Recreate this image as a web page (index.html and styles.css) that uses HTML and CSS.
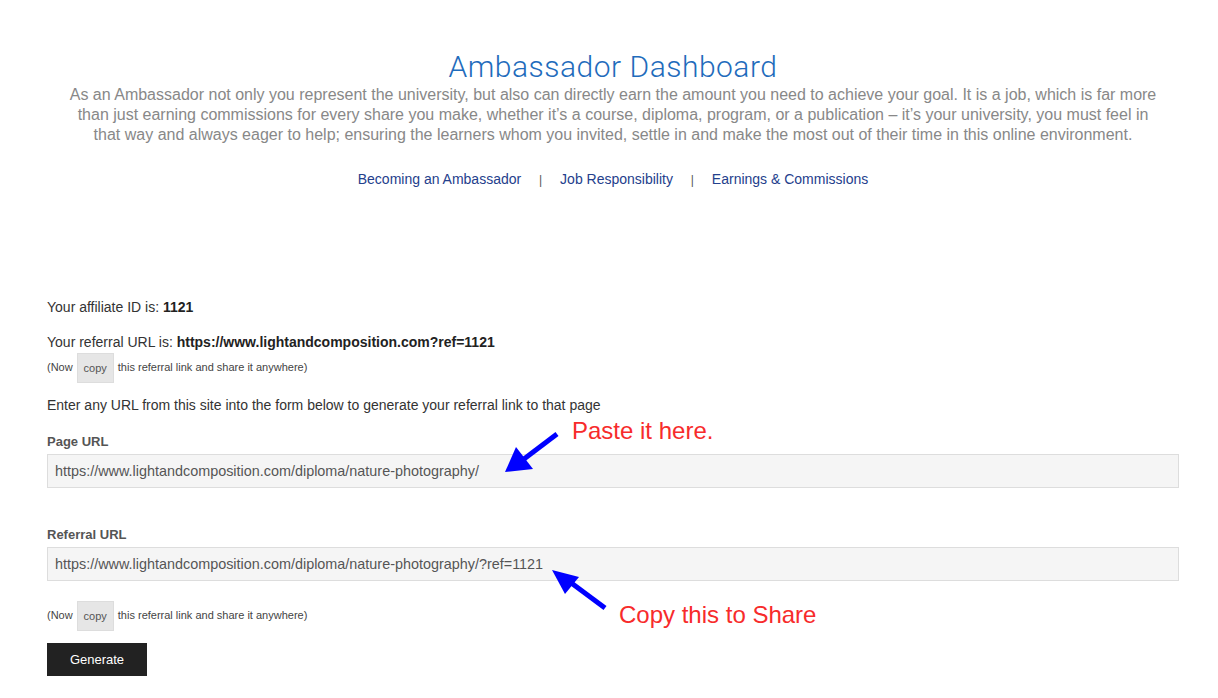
FILE: index.html
```html
<!DOCTYPE html>
<html lang="en">
<head>
  <meta charset="UTF-8" />
  <title>Ambassador Dashboard</title>
  <link rel="stylesheet" href="styles.css">
</head>
<body>
  <header class="intro">
    <h1>Ambassador Dashboard</h1>
    <p>As an Ambassador not only you represent the university, but also can directly earn the amount you need to achieve your goal. It is a job, which is far more than just earning commissions for every share you make, whether it’s a course, diploma, program, or a publication – it’s your university, you must feel in that way and always eager to help; ensuring the learners whom you invited, settle in and make the most out of their time in this online environment.</p>
    <nav class="intro-links">
      <a href="#">Becoming an Ambassador</a>
      <span class="sep">|</span>
      <a href="#">Job Responsibility</a>
      <span class="sep">|</span>
      <a href="#">Earnings &amp; Commissions</a>
    </nav>
  </header>

  <main class="panel">
    <p class="line">Your affiliate ID is: <strong>1121</strong></p>
    <p class="line line-ref">Your referral URL is: <strong>https://www.lightandcomposition.com?ref=1121</strong></p>
    <p class="note">(Now <button class="copy">copy</button> this referral link and share it anywhere)</p>
    <p class="line line-enter">Enter any URL from this site into the form below to generate your referral link to that page</p>

    <form class="ref-form">
      <label for="page-url">Page URL</label>
      <input id="page-url" type="text" value="https://www.lightandcomposition.com/diploma/nature-photography/">
      <label for="ref-url" class="label-ref">Referral URL</label>
      <input id="ref-url" type="text" value="https://www.lightandcomposition.com/diploma/nature-photography/?ref=1121">
      <p class="note note-form">(Now <button type="button" class="copy">copy</button> this referral link and share it anywhere)</p>
      <button type="button" class="generate">Generate</button>
    </form>
  </main>

  <!-- annotations drawn over the screenshot -->
  <svg class="arrows" width="1218" height="698" viewBox="0 0 1218 698">
    <line x1="557" y1="434" x2="520" y2="462" stroke="#0000ff" stroke-width="5" />
    <polygon points="505,472 516,447 533,469" fill="#0000ff" />
    <line x1="605" y1="608" x2="570" y2="582" stroke="#0000ff" stroke-width="5" />
    <polygon points="552,570 579,577 565,594" fill="#0000ff" />
  </svg>
  <div class="callout callout-paste">Paste it here.</div>
  <div class="callout callout-copy">Copy this to Share</div>
</body>
</html>
```

FILE: styles.css
```css
* {
  box-sizing: border-box;
}
body {
  margin: 0;
  position: relative;
  font-family: "Liberation Sans", Arial, sans-serif;
  color: #333;
  background: #fff;
}
.intro {
  width: 1100px;
  margin: 0 0 0 63px;
  text-align: center;
  padding-top: 50px;
}
.intro h1 {
  margin: 0;
  font-family: Roboto, "Liberation Sans", sans-serif;
  font-weight: 300;
  font-size: 30px;
  line-height: 34px;
  color: #1f6cbc;
  letter-spacing: 0.5px;
}
.intro p {
  margin: 1px 0 0;
  font-size: 16px;
  line-height: 20px;
  color: #888;
}
.intro-links {
  margin-top: 24px;
  font-size: 14px;
  line-height: 20px;
}
.intro-links a {
  color: #24408c;
  text-decoration: none;
}
.intro-links .sep {
  color: #555;
  font-size: 12px;
  margin: 0 14px;
}
.panel {
  width: 1132px;
  margin: 108px 0 0 47px;
}
.line {
  margin: 0;
  font-size: 14px;
  line-height: 18px;
}
.line strong {
  color: #222;
}
.line-ref {
  margin-top: 17px;
}
.note {
  margin: 1px 0 0;
  font-size: 11px;
  line-height: 30px;
  color: #444;
}
.copy {
  display: inline-block;
  vertical-align: middle;
  width: 37px;
  height: 30px;
  padding: 0;
  margin: 0 1px;
  border: 1px solid #ddd;
  background: #e6e6e6;
  font-family: inherit;
  font-size: 11px;
  color: #555;
}
.line-enter {
  margin-top: 13px;
}
.ref-form {
  display: flex;
  flex-direction: column;
  align-items: flex-start;
}
.ref-form label {
  margin-top: 19px;
  font-size: 13px;
  line-height: 18px;
  font-weight: bold;
  color: #555;
}
.ref-form .label-ref {
  margin-top: 38px;
}
.ref-form input {
  width: 100%;
  height: 34px;
  margin-top: 3px;
  padding: 0 7px;
  border: 1px solid #ddd;
  background: #f5f5f5;
  font-family: inherit;
  font-size: 14.4px;
  color: #555;
}
.note-form {
  margin-top: 19px;
}
.generate {
  margin-top: 12px;
  width: 100px;
  height: 33px;
  border: none;
  background: #222;
  color: #fff;
  font-family: inherit;
  font-size: 13px;
}
.arrows {
  position: absolute;
  top: 0;
  left: 0;
  pointer-events: none;
}
.callout {
  position: absolute;
  font-size: 24px;
  line-height: 26px;
  color: #f72b2b;
  white-space: nowrap;
}
.callout-paste {
  left: 572px;
  top: 418px;
}
.callout-copy {
  left: 619px;
  top: 602px;
}
```
